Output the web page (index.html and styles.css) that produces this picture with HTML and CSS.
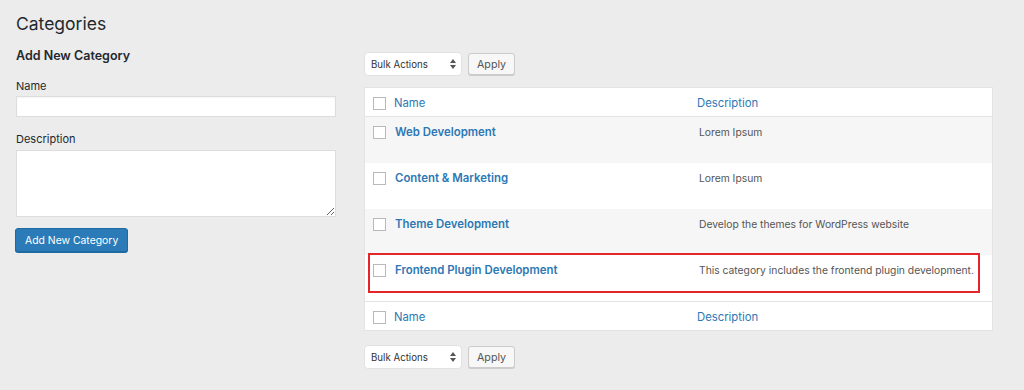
FILE: index.html
```html
<!DOCTYPE html>
<html lang="en">
<head>
  <meta charset="UTF-8" />
  <title>Categories</title>
  <link rel="stylesheet" href="styles.css">
</head>
<body>
  <div class="wrap">
    <h1>Categories</h1>
    <div class="columns">
      <div class="col-left">
        <h2>Add New Category</h2>
        <label class="field-label">Name</label>
        <input class="text-input" type="text">
        <label class="field-label desc-label">Description</label>
        <textarea class="text-area"></textarea>
        <button class="button-primary">Add New Category</button>
      </div>

      <div class="col-right">
        <div class="tablenav">
          <div class="bulk-select">
            <span>Bulk Actions</span>
            <svg width="6" height="10" viewBox="0 0 6 10"><path d="M0 4 L3 0 L6 4 Z M0 6 L3 10 L6 6 Z" fill="#555"/></svg>
          </div>
          <button class="button">Apply</button>
        </div>

        <div class="list-table">
          <div class="row head">
            <span class="check"></span>
            <span class="col-name">Name</span>
            <span class="col-desc">Description</span>
          </div>
          <div class="row alt">
            <span class="check"></span>
            <span class="row-title">Web Development</span>
            <span class="row-desc">Lorem Ipsum</span>
          </div>
          <div class="row">
            <span class="check"></span>
            <span class="row-title">Content &amp; Marketing</span>
            <span class="row-desc">Lorem Ipsum</span>
          </div>
          <div class="row alt">
            <span class="check"></span>
            <span class="row-title">Theme Development</span>
            <span class="row-desc">Develop the themes for WordPress website</span>
          </div>
          <div class="row">
            <span class="check"></span>
            <span class="row-title">Frontend Plugin Development</span>
            <span class="row-desc">This category includes the frontend plugin development.</span>
            <div class="marker"></div>
          </div>
          <div class="row foot">
            <span class="check"></span>
            <span class="col-name">Name</span>
            <span class="col-desc">Description</span>
          </div>
        </div>

        <div class="tablenav bottom">
          <div class="bulk-select">
            <span>Bulk Actions</span>
            <svg width="6" height="10" viewBox="0 0 6 10"><path d="M0 4 L3 0 L6 4 Z M0 6 L3 10 L6 6 Z" fill="#555"/></svg>
          </div>
          <button class="button">Apply</button>
        </div>
      </div>
    </div>
  </div>
</body>
</html>
```

FILE: styles.css
```css
body {
  margin: 0;
  background: #ececec;
  font-family: Inter, "Liberation Sans", sans-serif;
  color: #23282d;
}
.wrap {
  padding: 0 31px 0 16px;
}
h1 {
  margin: 0;
  padding-top: 12px;
  font-size: 17.5px;
  font-weight: 400;
  line-height: 24px;
}
.columns {
  display: flex;
  gap: 28px;
}
.col-left {
  width: 320px;
  display: flex;
  flex-direction: column;
  align-items: flex-start;
}
h2 {
  margin: 10px 0 0;
  font-size: 12.5px;
  font-weight: 600;
  line-height: 20px;
}
.field-label {
  margin-top: 12px;
  font-size: 11px;
  line-height: 16px;
}
.desc-label {
  margin-top: 14px;
}
.text-input {
  box-sizing: border-box;
  width: 320px;
  height: 21px;
  margin: 2px 0 0;
  border: 1px solid #ddd;
  background: #fff;
  box-shadow: inset 0 1px 2px rgba(0,0,0,.05);
}
.text-area {
  box-sizing: border-box;
  width: 320px;
  height: 67px;
  margin: 3px 0 0;
  border: 1px solid #ddd;
  background: #fff;
  resize: vertical;
}
.button-primary {
  margin-top: 11px;
  margin-left: -1px;
  height: 24px;
  padding: 0 9px;
  background: #2b7bb9;
  border: 1px solid #1e6aa3;
  border-radius: 3px;
  color: #fff;
  font-family: inherit;
  font-size: 10.4px;
  box-shadow: 0 1px 0 #1e6aa3;
}
.col-right {
  flex: 1;
}
.tablenav {
  display: flex;
  gap: 6px;
  align-items: center;
  margin-top: 16px;
}
.tablenav.bottom {
  margin-top: 14px;
}
.bulk-select {
  box-sizing: border-box;
  width: 98px;
  height: 24px;
  display: flex;
  align-items: center;
  justify-content: space-between;
  padding: 0 5px 0 6px;
  background: #fff;
  border: 1px solid #e2e2e2;
  border-radius: 4px;
  font-size: 9.7px;
  color: #333;
}
.button {
  box-sizing: border-box;
  height: 22px;
  padding: 0 8px;
  background: #f7f7f7;
  border: 1px solid #ccc;
  border-radius: 3px;
  box-shadow: 0 1px 0 #ccc;
  font-family: inherit;
  font-size: 10.7px;
  color: #555;
}
.list-table {
  margin-top: 11px;
  background: #fff;
  border: 1px solid #e3e3e3;
}
.row {
  position: relative;
  display: grid;
  grid-template-columns: 29px 303px 1fr;
  align-items: start;
  height: 46px;
  padding-top: 9px;
  box-sizing: border-box;
}
.row.alt {
  background: #f6f6f6;
}
.row.head {
  height: 29px;
  border-bottom: 1px solid #e3e3e3;
}
.row.foot {
  height: 29px;
  border-top: 1px solid #e3e3e3;
}
.check {
  box-sizing: border-box;
  width: 13px;
  height: 13px;
  margin-left: 8px;
  border: 1px solid #b9b9b9;
  background: #fff;
}
.col-name,
.col-desc {
  color: #2d78b4;
  font-size: 11.3px;
  line-height: 13px;
}
.row-title {
  padding-left: 1px;
  color: #2d78b4;
  font-weight: 600;
  font-size: 11.4px;
  line-height: 13px;
}
.row-desc {
  padding-left: 2px;
  color: #555;
  font-size: 10.3px;
  line-height: 13px;
  white-space: nowrap;
}
.marker {
  position: absolute;
  top: -2px;
  left: 3px;
  width: 612px;
  height: 40px;
  box-sizing: border-box;
  border: 2px solid #e3262a;
}
```
